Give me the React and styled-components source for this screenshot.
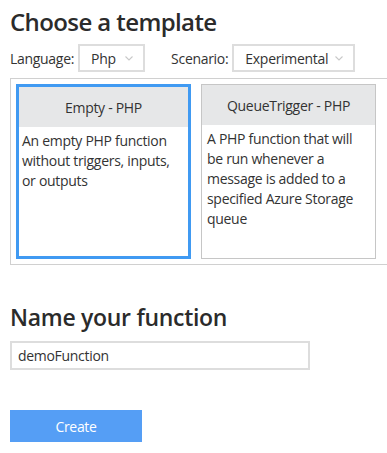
import React from 'react';
import styled, { createGlobalStyle } from 'styled-components';

const GlobalStyle = createGlobalStyle`
  html, body {
    margin: 0;
    padding: 0;
    overflow: hidden;
    background: #fff;
  }
  body {
    font-family: "Open Sans", "Noto Sans", sans-serif;
    color: #333;
    letter-spacing: -0.3px;
  }
`;

const Page = styled.div`
  padding: 6px 0 0 10px;
  width: 400px;
`;

const Title = styled.h2`
  margin: 0;
  font-size: 24px;
  font-weight: 600;
  line-height: 32px;
  letter-spacing: -0.6px;
  color: #2b2b2b;
`;

const Filters = styled.div`
  display: flex;
  align-items: center;
  margin-top: 6px;
  height: 28px;
`;

const Label = styled.span`
  font-size: 14px;
  margin-right: 4px;
  color: #333;
`;

const Select = styled.div`
  box-sizing: border-box;
  width: ${(p) => p.width}px;
  height: 28px;
  border: 2px solid #ddd;
  display: flex;
  align-items: center;
  justify-content: space-between;
  padding: 0 9px 0 11px;
  font-size: 14px;
  margin-right: ${(p) => p.gap || 0}px;
  svg {
    color: #c8c8c8;
  }
`;

const Templates = styled.div`
  box-sizing: border-box;
  margin-top: 6px;
  border: 1px solid #d0d0d0;
  padding: 5px;
  display: flex;
  gap: 10px;
`;

const Card = styled.div`
  box-sizing: border-box;
  width: 175px;
  height: 175px;
  border: ${(p) => (p.selected ? '3px solid #409af2' : '1px solid #c6c6c6')};
  background: #fff;
  cursor: pointer;
`;

const CardHeader = styled.div`
  height: 40px;
  background: #e6e7e8;
  display: flex;
  align-items: center;
  justify-content: center;
  font-size: 14px;
  color: #333;
`;

const CardBody = styled.div`
  padding: 4px ${(p) => (p.selected ? 3 : 5)}px;
  font-size: 14px;
  line-height: 20px;
  color: #333;
`;

const Subtitle = styled.h2`
  margin: 36px 0 0;
  font-size: 23px;
  font-weight: 600;
  line-height: 32px;
  letter-spacing: -0.3px;
  color: #2b2b2b;
`;

const NameInput = styled.input`
  box-sizing: border-box;
  display: block;
  margin-top: 8px;
  width: 300px;
  height: 29px;
  border: 2px solid #ddd;
  padding: 0 6px;
  font-family: inherit;
  font-size: 14px;
  letter-spacing: -0.3px;
  color: #333;
  outline: none;
`;

const CreateButton = styled.button`
  display: block;
  margin-top: 40px;
  width: 132px;
  height: 32px;
  border: none;
  background: #559ef5;
  color: #fff;
  font-family: inherit;
  font-size: 14px;
  letter-spacing: -0.3px;
  cursor: pointer;
`;

const Chevron = () => (
  <svg width="10" height="10" viewBox="0 0 10 10" fill="none">
    <path d="M1.5 3.5l3.5 3.5 3.5-3.5" stroke="currentColor" strokeWidth="1.1" />
  </svg>
);

const templates = [
  {
    id: 'empty',
    name: 'Empty - PHP',
    text: 'An empty PHP function without triggers, inputs, or outputs',
  },
  {
    id: 'queue',
    name: 'QueueTrigger - PHP',
    text: 'A PHP function that will be run whenever a message is added to a specified Azure Storage queue',
  },
];

const App = () => {
  const selected = 'empty';
  return (
    <Page>
      <GlobalStyle />
      <Title>Choose a template</Title>
      <Filters>
        <Label>Language:</Label>
        <Select width={67} gap={26}>
          Php
          <Chevron />
        </Select>
        <Label>Scenario:</Label>
        <Select width={123}>
          Experimental
          <Chevron />
        </Select>
      </Filters>
      <Templates>
        {templates.map((t) => (
          <Card key={t.id} selected={t.id === selected}>
            <CardHeader>{t.name}</CardHeader>
            <CardBody selected={t.id === selected}>{t.text}</CardBody>
          </Card>
        ))}
      </Templates>
      <Subtitle>Name your function</Subtitle>
      <NameInput defaultValue="demoFunction" />
      <CreateButton>Create</CreateButton>
    </Page>
  );
};

export default App;
